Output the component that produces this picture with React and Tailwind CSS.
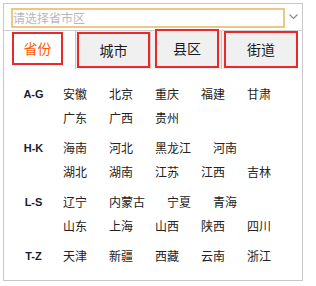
import React from 'react';

const groups = [
    { label: 'A-G', items: ['安徽', '北京', '重庆', '福建', '甘肃', '广东', '广西', '贵州'] },
    { label: 'H-K', items: ['海南', '河北', '黑龙江', '河南', '湖北', '湖南', '江苏', '江西', '吉林'] },
    { label: 'L-S', items: ['辽宁', '内蒙古', '宁夏', '青海', '山东', '上海', '山西', '陕西', '四川'] },
    { label: 'T-Z', items: ['天津', '新疆', '西藏', '云南', '浙江'] },
];

export default function App() {
    return (
        <div className="w-[316px] h-[286px] bg-white overflow-hidden pt-[3px] pl-[3px]" style={{ fontFamily: '"Noto Sans CJK SC", "Noto Sans", sans-serif' }}>
            <div className="w-[300px] h-[278px] border border-[#c8c8c8] bg-white">
                {/* select input */}
                <div className="h-[27px] flex items-start border-b border-[#d0d0d0]">
                    <div className="ml-[7px] mt-[4px] w-[274px] h-[20px] border-2 border-[#ecc785] flex items-center text-[12px] leading-none text-[#b8b8b8]">
                        请选择省市区
                    </div>
                    <svg className="ml-[4px] mt-[10px]" width="9" height="6" viewBox="0 0 9 6">
                        <path d="M0.5 0.5 L4.5 4.5 L8.5 0.5" fill="none" stroke="#8a8a8a" strokeWidth="1.2" />
                    </svg>
                </div>

                {/* tabs */}
                <div className="flex h-[38px] items-start">
                    <div className="w-[71px] h-full bg-white">
                        <div className="ml-[8px] mt-[1px] w-[51px] h-[33px] border-2 border-[#ea2a2a] bg-white flex items-center justify-center text-[14px] text-[#ff5a00]">
                            省份
                        </div>
                    </div>
                    <div className="w-[75px] h-full bg-[#f0f0f0] border-l border-[#c8c8c8]">
                        <div className="ml-[1px] mt-[1px] w-[73px] h-[36px] border-2 border-[#ea2a2a] flex items-center justify-center text-[14px] text-[#1a1a1a]">
                            城市
                        </div>
                    </div>
                    <div className="w-[71px] h-full bg-[#f0f0f0] border-l border-[#c8c8c8]">
                        <div className="ml-[4px] -mt-[2px] w-[64px] h-[39px] border-2 border-[#ea2a2a] flex items-center justify-center text-[14px] text-[#1a1a1a]">
                            县区
                        </div>
                    </div>
                    <div className="w-[77px] h-full bg-[#f0f0f0] border-l border-[#c8c8c8]">
                        <div className="ml-[2px] w-[74px] h-[37px] border-2 border-[#ea2a2a] flex items-center justify-center text-[14px] text-[#1a1a1a]">
                            街道
                        </div>
                    </div>
                </div>

                {/* provinces */}
                <div className="pt-[13px] flex flex-col gap-[6px]">
                    {groups.map((g) => (
                        <div key={g.label} className="flex">
                            <div className="w-[49px] pl-[10px] text-center h-[24px] leading-[24px] text-[11px] font-bold text-[#1c1c30]" style={{ fontFamily: '"Liberation Sans", sans-serif' }}>
                                {g.label}
                            </div>
                            <div className="ml-[10px] w-[236px] flex flex-wrap">
                                {g.items.map((c) => (
                                    <span key={c} className="mr-[22px] h-[24px] leading-[24px] text-[12px] text-[#222]">
                                        {c}
                                    </span>
                                ))}
                            </div>
                        </div>
                    ))}
                </div>
            </div>
        </div>
    );
}
